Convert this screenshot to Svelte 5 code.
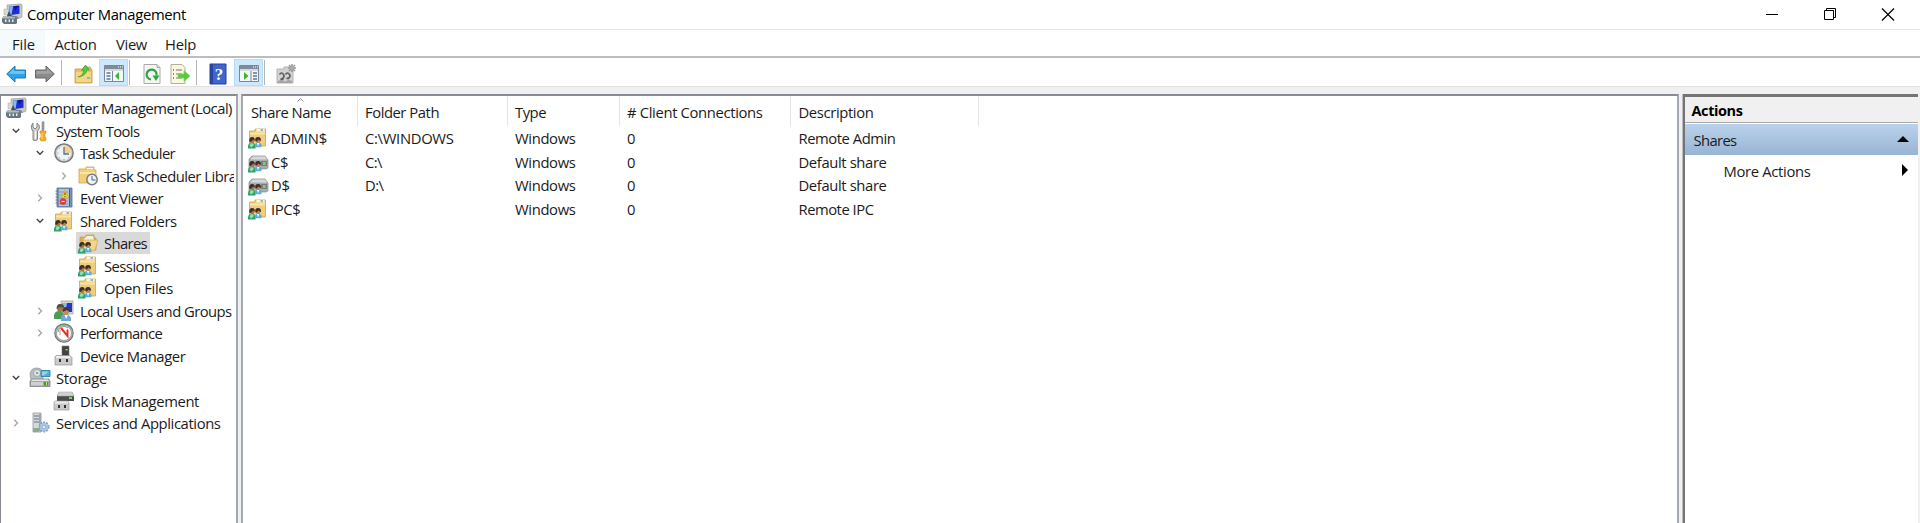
<script>
  const tree = [
    ['computer', 'Computer Management (Local)', 0, '', 200],
    ['tools', 'System Tools', 1, 'open', 83.5],
    ['clock', 'Task Scheduler', 2, 'open', 95],
    ['library', 'Task Scheduler Library', 3, 'closed', 145],
    ['event', 'Event Viewer', 2, 'closed', 83],
    ['share', 'Shared Folders', 2, 'open', 96.5],
    ['openshare', 'Shares', 3, '', 43],
    ['share', 'Sessions', 3, '', 55],
    ['share', 'Open Files', 3, '', 69],
    ['users', 'Local Users and Groups', 2, 'closed', 151.5],
    ['gauge', 'Performance', 2, 'closed', 82],
    ['device', 'Device Manager', 2, '', 105.5],
    ['storage', 'Storage', 1, 'open', 51],
    ['disk', 'Disk Management', 2, '', 119],
    ['services', 'Services and Applications', 1, 'closed', 164.5]
  ];
  const headers = [
    ['Share Name', 80], ['Folder Path', 74], ['Type', 31],
    ['# Client Connections', 135.5], ['Description', 75]
  ];
  const shares = [
    ['share', ['ADMIN$', 56], ['C:\\WINDOWS', 88.5], ['Remote Admin', 97]],
    ['drive', ['C$', 17], ['C:\\', 17], ['Default share', 88]],
    ['drive', ['D$', 18.5], ['D:\\', 18.5], ['Default share', 88]],
    ['share', ['IPC$', 29.5], ['', 0], ['Remote IPC', 75]]
  ];

  // Tracks a label so its advance width equals the given number of pixels.
  function fit(node, width) {
    const n = node.textContent.length;
    if (!n) return;
    node.style.letterSpacing = (width - node.getBoundingClientRect().width) / n + 'px';
  }
</script>

{#snippet label(text, width)}<span class="label" use:fit={width}>{text}</span>{/snippet}

{#snippet people()}
  <g transform="translate(0 3.600) scale(.84)">
    <path d="M0 20v-3q1-4 4.500-4t4.500 4v3z" fill="#2fa269" />
    <path d="M2 17l2 2 3-3-1-2H3z" fill="#8fe0b4" />
    <path d="M8.500 18.500v-3q1-3 3.500-3t4 3v3z" fill="#58acdf" />
    <path d="M10.500 13.500l1.500 4 1.600-4z" fill="#e8f6ff" />
    <ellipse cx="5" cy="10.700" rx="2.600" ry="3.200" fill="#a9754f" />
    <path d="M1.500 12Q1 6.500 5 6.500q3.500 0 3 4.500L5.800 9.400q-1.500 2-2.500 2.600z" fill="#3d2f26" />
    <ellipse cx="12" cy="10.400" rx="2.600" ry="3.200" fill="#b5825d" />
    <path d="M8.700 11.500q-.8-5 3.300-5t3.200 5l-2.700-2.200q-1.500 2-2.300 2.500z" fill="#3d2f26" />
  </g>
{/snippet}

{#snippet icon(name)}
  <svg class="icon" width="20" height="20" viewBox="0 0 20 20">
    {#if name === 'computer'}
      <path d="M5 1l14-1 1 1v12l-2 1H6z" fill="#c9c9c2" stroke="#9b9b93" stroke-width=".7" />
      <path d="M7.500 2.300l10-.5v8l-10 1.500z" fill="#1c2fd0" />
      <path d="M7.500 2.300H11L9.500 11l-2 .3z" fill="#8db5f4" />
      <path d="M12 2l5-.2-4 5z" fill="#0a14a0" />
      <path d="M2 5h4.500v6H2z" fill="#d5d8d6" stroke="#a6a8a6" stroke-width=".5" />
      <path d="M5 12l2-5 2 4 2 1z" fill="#3c4f60" />
      <path d="M10 12h5l2 3h-7z" fill="#85888a" />
      <path d="M1 12.500h12l2 2V19l-1 1H2l-2-2v-3z" fill="#66777f" />
      <path d="M1 13h12v1.500H1z" fill="#aebbc0" />
      <path d="M3 15.500h1.500V18H3zm3.500 0H8V18H6.500zm3.500 0h1.500V18H10z" fill="#e2e9ea" />
    {:else if name === 'tools'}
      <path d="M3 2v4l2 2 2-2V2q4 3 1.500 7l-1 1v8q0 1.500-2.500 1.500T3 18v-8L2 9Q0 5 3 2z" fill="#cccccc" stroke="#858585" stroke-width="1" />
      <path d="M5.500 10v8" stroke="#f8f8f8" stroke-width="1.200" />
      <path d="M12 1l2-.5v8l-1 2h-1z" fill="#9ca1a5" stroke="#777" stroke-width=".5" />
      <path d="M10 10h6v2l-1 1v3l1 1v2l-2 1h-2l-2-1v-2l1-1v-3l-1-1z" fill="#f3af20" stroke="#c98710" stroke-width=".6" />
      <path d="M12 12v6" stroke="#ffe27b" />
    {:else if name === 'clock'}
      <circle cx="10" cy="10" r="9.200" fill="#b6b6b6" stroke="#777" stroke-width="1.300" />
      <circle cx="10" cy="10" r="7.400" fill="#eef3f7" stroke="#d8d8d8" />
      <path d="M10 10V3a7 7 0 0 1 7 7z" fill="#f2ce8e" />
      <path d="M10 4v7h5" fill="none" stroke="#52748f" stroke-width="1.300" />
      <path d="M10 17v-1M3.500 10h1M15 15l-.7-.7M5 15l.7-.7M5 5l.7.7" stroke="#888" stroke-width=".8" />
    {:else if name === 'library'}
      <path d="M1 3h7V1h8v3h2v13H1z" fill="#f2cf78" stroke="#d1a74d" stroke-width=".8" />
      <path d="M9 2h6v1H9z" fill="#fff" />
      <path d="M2 6h15v2H2z" fill="#fae5a8" />
      <circle cx="14" cy="13.500" r="5.200" fill="#f0f3f5" stroke="#777c80" stroke-width="1.500" />
      <path d="M14 10v4h3.500" fill="none" stroke="#436984" />
    {:else if name === 'event'}
      <path d="M3 0h15v19H3z" fill="#7795bd" stroke="#536c94" stroke-width=".8" />
      <path d="M5 1h10v17H5z" fill="#b1c5dd" />
      <path d="M15.500 1v17" stroke="#3f5c8c" />
      <path d="M5 4h9M5 7h9M5 10h9M5 13h9M5 16h9" stroke="#718baf" stroke-width=".7" />
      <path d="M1.500 3h3M1.500 6h3M1.500 9h3M1.500 12h3M1.500 15h3" stroke="#777" />
      <path d="M11 2l4 8H7z" fill="#f7cf31" stroke="#c79911" stroke-width=".5" />
      <path d="M11 4.500V7m0 1v1" stroke="#554411" />
      <circle cx="9" cy="13.500" r="3.200" fill="#d83c34" />
      <path d="M7.500 13.500h3" stroke="#fff" stroke-width="1.200" />
    {:else if name === 'share'}
      <path d="M1.500 3H7V1h10.500v17h-16z" fill="#f0cd7c" stroke="#caa34f" stroke-width=".8" />
      <path d="M8 1h9v3H8z" fill="#f9df9b" />
      <path d="M9 2h7" stroke="#fff" stroke-width="1.300" />
      <path d="M12.500 2H15" stroke="#3b91db" stroke-width="1.200" />
      <path d="M2 4.500h15v2H2z" fill="#f9e4a9" />
      {@render people()}
    {:else if name === 'openshare'}
      <path d="M2 4h6V2h8v3h2v12H2z" fill="#d8af5a" stroke="#c59b47" stroke-width=".7" />
      <path d="M9 3h6l1 4H5z" fill="#f7f1d8" />
      <path d="M5 7h15l-3 10-4 1.500H4z" fill="#f5d589" stroke="#cfaa57" stroke-width=".7" />
      {@render people()}
    {:else if name === 'drive'}
      <path d="M4 4h13l3 4v8l-2 1H1V7z" fill="#a9abae" stroke="#87898b" stroke-width=".7" />
      <path d="M5 4.500h12l2 3H2z" fill="#d7d8da" />
      <path d="M13 9h6v5h-6z" fill="#787d83" />
      <path d="M15 10h2.500v3H15z" fill="#78d95c" />
      {@render people()}
    {:else if name === 'users'}
      <path d="M7 0h12v13H8z" fill="#d3d3ce" stroke="#b3b3ae" />
      <path d="M8 2h10v9H9z" fill="#2136ca" />
      <path d="M8 2h5l-1 7H9z" fill="#8eb5ef" />
      <path d="M0 18v-4q1-4 5-4t5 4v4z" fill="#4d9b57" />
      <ellipse cx="6" cy="7" rx="3" ry="4" fill="#a37450" />
      <path d="M2.500 8q0-5 4-5T10 7L6 6z" fill="#4e5437" />
      <path d="M7 20v-4q1-3 4.500-3t5.500 4v3z" fill="#6ba9dc" />
      <ellipse cx="12" cy="10.500" rx="3" ry="3.700" fill="#bd8b67" />
      <path d="M8.500 11q0-5 3.500-5t4 5l-3-2z" fill="#493427" />
      <path d="M10.500 14l1.500 4 2-4z" fill="#fff" />
    {:else if name === 'gauge'}
      <circle cx="10" cy="10" r="9.200" fill="#bbb" stroke="#777" stroke-width="1.200" />
      <circle cx="10" cy="10" r="7.500" fill="#fff" stroke="#888" stroke-width=".7" />
      <path d="M4 9a6 6 0 0 1 10-4" fill="none" stroke="#6da884" />
      <path d="M7 5l6.500 8V6.500" fill="none" stroke="#e23328" stroke-width="2" />
      <path d="M6 12V7" stroke="#eb8a80" />
    {:else if name === 'device'}
      <path d="M8 0h7v11H8z" fill="#424242" stroke="#777" stroke-width=".6" />
      <path d="M11.500 3h2v1.500h-2z" fill="#8be84e" />
      <path d="M2 9.500h14l2 2V19H1v-8z" fill="#c9c9c9" stroke="#949494" stroke-width=".7" />
      <path d="M2 10h14v2H2z" fill="#eeeeee" />
      <path d="M5 13h2v3H5zm7 0h2v3h-2z" fill="#333" />
    {:else if name === 'storage'}
      <path d="M0 6Q1 0 6.500 0T13 5v7H1z" fill="#b8bec1" stroke="#8a9194" stroke-width=".7" />
      <circle cx="7" cy="5" r="3.500" fill="#dce4e5" stroke="#92999c" stroke-width=".7" />
      <circle cx="7" cy="5" r="1" fill="#7c8589" />
      <path d="M11 2.500h9v6h-9z" fill="#4baedb" stroke="#3a8bad" />
      <path d="M12 3.500h7l-5 4h-2z" fill="#8dd5f0" />
      <path d="M2 11h17l1 2v5.500H0V13z" fill="#a3a5a8" stroke="#777" stroke-width=".7" />
      <path d="M2 11.500h16l1 1.500H1z" fill="#e5e5e5" />
      <path d="M1 14h12v3.500H1z" fill="#cfd0d2" />
      <path d="M14 14h4v3.500h-4z" fill="#568d3c" /><path d="M16 14v3h1v-3z" fill="#b6f07f" />
    {:else if name === 'disk'}
      <path d="M5 1h13l2 4v5H3V5z" fill="#4c4c4c" />
      <path d="M5 1h13l2 4H3z" fill="#cfd0d1" stroke="#aaa" stroke-width=".5" />
      <path d="M15 6h3v2h-3z" fill="#72dc4d" />
      <path d="M1 10h13l1 2v7H0v-7z" fill="#c9c9c9" stroke="#929292" stroke-width=".6" />
      <path d="M1 10.500h13v2H1z" fill="#ececec" />
      <path d="M4 14h2v3H4zm6 0h2v3h-2z" fill="#333" />
    {:else if name === 'services'}
      <path d="M3 0h8v19H3z" fill="#d4d9dc" stroke="#929ba1" stroke-width=".8" />
      <path d="M4 3h6M4 6h6M4 9h6" stroke="#68747d" stroke-width="1.200" />
      <path d="M9 1h2v17H9z" fill="#9ca7af" />
      <path d="M3 15h6v4H3z" fill="#8bac8f" /><path d="M7 16h2v1H7z" fill="#49d34d" />
      <circle cx="14" cy="14" r="4.600" fill="#adc8de" stroke="#7fa4c4" stroke-width="2" stroke-dasharray="1.800 1.100" />
      <circle cx="14" cy="14" r="3.800" fill="#abc7df" /><circle cx="14" cy="14" r="1.500" fill="#fff" stroke="#6e94b5" stroke-width=".6" />
    {:else if name === 'back' || name === 'forward'}
      {@const blue = name === 'back'}
      <g transform={blue ? '' : 'translate(20 0) scale(-1 1)'}>
        <path d="M.7 10L9 2v4h10.500v8H9v4z" fill={blue ? '#2da2e8' : '#8a8a8a'} stroke={blue ? '#2779ae' : '#686868'} stroke-linejoin="round" />
        <path d="M2.500 9.700L8 4.500V7h10.500v3z" fill={blue ? '#6fc5f5' : '#a3a3a3'} />
      </g>
    {:else if name === 'up'}
      <path d="M1 5h8l1-2h6l2 3v13H1z" fill="#e8c165" stroke="#c49a43" stroke-width=".8" />
      <path d="M2 8h15v10H2z" fill="#f4d689" />
      <path d="M13 14h3" stroke="#5ca5d6" stroke-width="1.300" />
      <path d="M4 13q5-1 6-7L7.500 6.500 11.500 1l4 5-2.500-.2Q12 12 4 13z" fill="#56cb39" stroke="#35a226" stroke-width=".7" />
    {:else if name === 'leftpane' || name === 'rightpane'}
      {@const left = name === 'leftpane'}
      <path d="M.5 2.500h19v16H.5z" fill="#f5f6f7" stroke="#7c8793" />
      <path d="M1 3h18v3H1z" fill="#7f8b98" />
      <path d="M14 4h1m1 0h1m1 0h1" stroke="#fff" />
      <path d="M1 7h18" stroke="#b3bdc8" />
      <path d={left ? 'M8.500 8v10' : 'M12 8v10'} stroke="#7c8793" />
      <path d={left ? 'M2.500 10h4m-4 3h4m-4 3h4' : 'M14 10h4m-4 3h4m-4 3h4'} stroke="#547aa5" stroke-width="1.300" />
      <path d={left ? 'M15 9v8l-4-4z' : 'M5 9v8l4.500-4z'} fill="#36ba2b" />
    {:else if name === 'refresh'}
      <path d="M2 .5h13l3 3v16H2z" fill="#f5f5f2" stroke="#aaa" />
      <path d="M15 .5v3h3" fill="#ddd" stroke="#aaa" />
      <path d="M9 15.500a5 5 0 1 1 5.500-4" fill="none" stroke="#31a34a" stroke-width="2.200" />
      <path d="M10.500 11.500h7L14 17z" fill="#31a34a" />
    {:else if name === 'export'}
      <path d="M1 .5h11l3 3v16H1z" fill="#fbf6df" stroke="#b5b09c" />
      <path d="M3 6h1m-1 4h1m-1 4h1" stroke="#44698e" stroke-width="1.500" />
      <path d="M6 6h6m-6 4h6m-6 4h6" stroke="#777" stroke-width="1.200" />
      <path d="M8 10h6V6.500l6 5.500-6 5.500V14H8z" fill="#58ca3a" stroke="#84d76d" stroke-width=".7" />
    {:else if name === 'help'}
      <path d="M2 0h16v20H2z" fill="#3f66cc" stroke="#24439b" />
      <path d="M2 0h3v20H2z" fill="#26459f" />
      <text x="11" y="16" text-anchor="middle" font-size="17" fill="#fff" font-family="Liberation Serif, serif" font-weight="bold">?</text>
    {:else if name === 'newshare'}
      <path d="M1 5h7V3h7v3h2v13H1z" fill="#d2d2d2" stroke="#b2b2b2" />
      <path d="M16 0v8M12 4h8M13 1l6 6M19 1l-6 6" stroke="#929292" stroke-width="1.500" /><circle cx="16" cy="4" r="2.300" fill="#aaa" />
      <path d="M3.500 10.500q2-3 4 0t-3 5h3M9.500 10.500q2-3 4 0t-3 4h3" fill="none" stroke="#5e5e5e" stroke-width="1.700" />
      <path d="M1 19q1-3 4-3t4 2q1-2 4-2t3 2v1z" fill="#a5a5a5" />
    {/if}
  </svg>
{/snippet}

<div class="window">
  <header class="title">
    {@render icon('computer')}
    <span class="name">{@render label('Computer Management', 159)}</span>
    <div class="controls">
      <svg width="14" height="14"><path d="M1 7.500h12" stroke="#000" /></svg>
      <svg width="14" height="14"><path d="M1.500 3.500h9v9h-9zM3.500 3.500v-2h9v9h-2" fill="none" stroke="#000" /></svg>
      <svg width="14" height="14"><path d="M1 1.500l12 12M13 1.500l-12 12" stroke="#000" stroke-width="1.200" /></svg>
    </div>
  </header>
  <nav>
    <span class="file">{@render label('File', 23)}</span>
    <span class="action">{@render label('Action', 42)}</span>
    <span class="view">{@render label('View', 31)}</span>
    <span class="menuhelp">{@render label('Help', 31)}</span>
  </nav>
  <div class="toolbar">
    <span class="tool back">{@render icon('back')}</span>
    <span class="tool">{@render icon('forward')}</span>
    <i class="first"></i>
    <span class="tool up">{@render icon('up')}</span>
    <span class="tool on">{@render icon('leftpane')}</span>
    <i></i>
    <span class="tool refresh">{@render icon('refresh')}</span>
    <span class="tool export">{@render icon('export')}</span>
    <i></i>
    <span class="tool help">{@render icon('help')}</span>
    <span class="tool on">{@render icon('rightpane')}</span>
    <i></i>
    <span class="tool new">{@render icon('newshare')}</span>
  </div>
  <main>
    <section class="tree">
      {#each tree as [name, text, level, state, width]}
        <div class="node" style="padding-left: {level * 24 + (level ? -13 : 5)}px">
          {#if level}
            <span class="chevron">
              {#if state === 'open'}
                <svg width="8" height="8"><path d="M.8 2L4 5.200 7.200 2" fill="none" stroke="#444" stroke-width="1.400" /></svg>
              {:else if state === 'closed'}
                <svg width="8" height="8"><path d="M2.300 .8L5.500 4 2.300 7.200" fill="none" stroke="#a6a6a6" stroke-width="1.300" /></svg>
              {/if}
            </span>
          {/if}
          {@render icon(name)}
          <span class="text" class:selected={text === 'Shares'}>{@render label(text, width)}</span>
        </div>
      {/each}
    </section>
    <section class="list">
      <svg class="sort" width="7" height="4"><path d="M.5 3.500l3-3 3 3" fill="none" stroke="#888" /></svg>
      <div class="grid head">
        {#each headers as [text, width]}<span class="cell">{@render label(text, width)}</span>{/each}
      </div>
      {#each shares as [name, share, path, desc]}
        <div class="grid row">
          <span class="cell share">{@render icon(name)}{@render label(share[0], share[1])}</span>
          <span class="cell">{@render label(path[0], path[1])}</span>
          <span class="cell">{@render label('Windows', 60.5)}</span>
          <span class="cell">{@render label('0', 8.5)}</span>
          <span class="cell">{@render label(desc[0], desc[1])}</span>
        </div>
      {/each}
    </section>
    <aside>
      <h2>{@render label('Actions', 51)}</h2>
      <div class="group">{@render label('Shares', 43)}<svg width="12" height="6"><path d="M0 6l6-6 6 6z" /></svg></div>
      <div class="more">{@render label('More Actions', 87)}<svg width="6" height="12"><path d="M0 0l6 6-6 6z" /></svg></div>
    </aside>
  </main>
</div>

<style>
  :global(body) { margin: 0; overflow: hidden; background: #f0f0f0; }
  .window {
    display: flex; flex-direction: column; width: 1920px; height: 523px;
    box-sizing: border-box; overflow: hidden;
    font: 14.800px/20px "Open Sans", "Noto Sans", sans-serif; color: #1b1b1b; background: #f0f0f0;
  }
  svg { display: block; flex: none; overflow: visible; }
  .label { display: inline-block; white-space: pre; }
  .title { display: flex; align-items: center; height: 28px; padding: 0 0 1px 2px; background: #fff; border-bottom: 1px solid #e5e5e5; color: #000; }
  .name { margin-left: 5px; padding-bottom: 1px; }
  .controls { display: flex; gap: 44px; margin-left: auto; margin-right: 25px; }
  nav { display: flex; align-items: center; height: 26px; background: #fff; border-bottom: 2px solid #bdbdbf; }
  nav span { display: flex; align-items: center; height: 26px; }
  nav .label { padding-top: 4px; height: 22px; display: block; }
  .file { width: 33px; padding-left: 12px; background: #f5faff; }
  .action { margin-left: 9.500px; }
  .view { margin-left: 19.500px; }
  .menuhelp { margin-left: 18px; }
  .toolbar { display: flex; align-items: center; height: 27px; padding: 1px 0 0 1px; background: #fff; border-bottom: 1px solid #e2e2e2; }
  .tool { display: grid; place-items: center; width: 29px; height: 25px; padding-top: 2px; }
  .tool.on { width: 27px; height: 24px; padding-top: 1px; background: #cce8ff; border: 1px solid #b5dcf8; }
  .toolbar i { width: 1px; height: 25px; background: #b5b5b5; }
  .toolbar i.first { margin-left: 2px; }
  .up { margin-left: 7px; }
  .refresh { margin-left: 7px; }
  .export { margin-left: -1px; margin-right: 2px; }
  .help { margin-left: 6px; }
  .help + .on { margin-left: 2px; }
  .toolbar .new { margin-left: 6px; }
  .up + .on { margin-left: 1px; }
  .on + i { margin-left: 1px; }
  main { display: flex; flex: 1; min-height: 0; padding-top: 7px; }
  .tree { box-sizing: border-box; width: 238px; border: solid #868b96; border-width: 2px 2px 0 1px; border-right-color: #a3a9b2; background: #fff; padding: 1px 2px 0 0; overflow: hidden; }
  .node { display: flex; align-items: center; height: 22.500px; white-space: nowrap; }
  .chevron { display: grid; place-items: center; flex: none; width: 8px; margin-right: 10px; }
  .text { display: flex; align-items: center; min-width: 0; height: 22px; padding: 0 5px 0 6px; overflow: hidden; }
  .text.selected { background: #d9d9d9; box-shadow: -22px 0 #d9d9d9; padding-right: 3px; }
  .node .icon { position: relative; z-index: 1; }
  .list { box-sizing: border-box; width: 1438px; margin-left: 3px; border: solid #868b96; border-width: 2px 2px 0; border-left-color: #a3a9b2; border-right-color: #a3a9b2; background: #fff; position: relative; }
  .sort { position: absolute; left: 54px; top: 2px; }
  .grid { display: grid; grid-template-columns: 115px 150px 112px 171px 188px; }
  .cell { box-sizing: border-box; display: flex; align-items: center; padding-left: 7px; }
  .cell:first-child { padding-left: 8px; }
  .cell:last-child { padding-left: 7.500px; }
  .head { height: 30px; }
  .head .cell { border-right: 1px solid #e5e5e5; padding-top: 2px; }
  .row { height: 23.750px; }
  .row .cell.share { padding-left: 5px; gap: 3px; }
  aside { box-sizing: border-box; flex: 1; margin: 0 2px 0 4px; border: solid #747474; border-width: 3px 0 0 2px; box-shadow: -1px 0 #bcbcbc; background: #fff; }
  h2 { display: flex; align-items: center; margin: 0; height: 23px; padding: 2px 0 0 6.500px; font-size: 14.500px; line-height: 20px; font-weight: 700; color: #000; background: #f0f0f0; border-bottom: 1px solid #aaa; }
  .group { display: flex; align-items: center; justify-content: space-between; height: 31px; margin-top: 1px; padding: 1px 9px 0 8.500px; box-sizing: border-box; background: linear-gradient(#bad2eb, #98b4d4); }
  .more { display: flex; align-items: center; justify-content: space-between; height: 31px; padding: 0 10px 0 38.500px; }
  .group svg, .more svg { position: relative; top: -1px; }
</style>
